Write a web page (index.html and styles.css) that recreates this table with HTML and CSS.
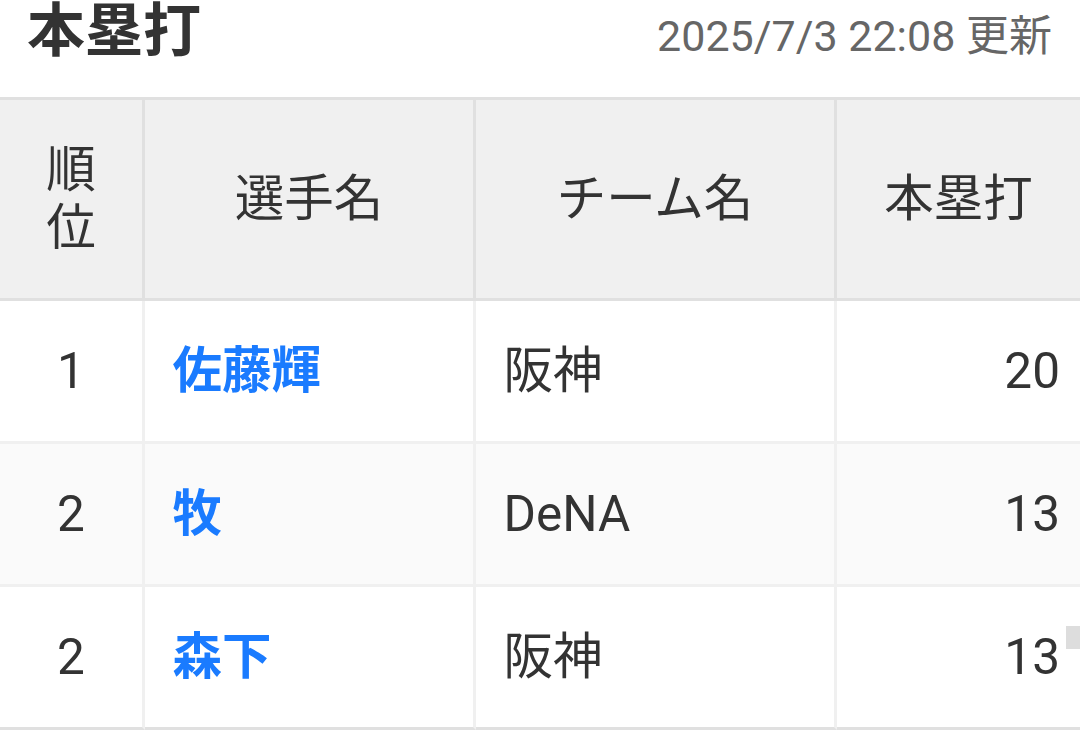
FILE: index.html
```html
<!DOCTYPE html>
<html lang="ja">
<head>
<meta charset="utf-8">
<title>本塁打</title>
<link rel="stylesheet" href="styles.css">
</head>
<body>
<div class="page">
  <div class="head">
    <h1 class="title">本塁打</h1>
    <span class="updated">2025/7/3 22:08 更新</span>
  </div>
  <table class="rank">
    <colgroup>
      <col class="c-rank">
      <col class="c-name">
      <col class="c-team">
      <col class="c-hr">
    </colgroup>
    <thead>
      <tr>
        <th>順位</th>
        <th>選手名</th>
        <th>チーム名</th>
        <th class="last">本塁打</th>
      </tr>
    </thead>
    <tbody>
      <tr>
        <td class="num-c">1</td>
        <td><a class="player" href="#">佐藤輝</a></td>
        <td>阪神</td>
        <td class="num-r last">20</td>
      </tr>
      <tr class="alt">
        <td class="num-c">2</td>
        <td><a class="player" href="#">牧</a></td>
        <td>DeNA</td>
        <td class="num-r last">13</td>
      </tr>
      <tr>
        <td class="num-c">2</td>
        <td><a class="player" href="#">森下</a></td>
        <td>阪神</td>
        <td class="num-r last">13</td>
      </tr>
    </tbody>
  </table>
  <div class="scroll-thumb"></div>
</div>
</body>
</html>
```

FILE: styles.css
```css
html, body {
  margin: 0;
  padding: 0;
  background: #ffffff;
  overflow: hidden;
}

body {
  font-family: "Roboto", "Noto Sans CJK JP", sans-serif;
  color: #333333;
}

.page {
  position: relative;
  width: 1080px;
  height: 752px;
  overflow: hidden;
}

.head {
  display: flex;
  justify-content: space-between;
  align-items: baseline;
  padding: 2px 28px 0 27px;
  height: 95px;
}

.title {
  margin: 0;
  font-size: 58px;
  font-weight: 700;
  line-height: 1;
  color: #333333;
}

.updated {
  font-size: 43px;
  line-height: 1;
  color: #666666;
}

.rank {
  width: 1080px;
  table-layout: fixed;
  border-collapse: separate;
  border-spacing: 0;
  border-top: 3px solid #e0e0e0;
  font-size: 49.5px;
  line-height: 58px;
}

.c-rank { width: 145px; }
.c-name { width: 331px; }
.c-team { width: 361px; }
.c-hr { width: 243px; }

.rank th {
  background: #f0f0f0;
  font-weight: 400;
  text-align: center;
  vertical-align: middle;
  padding: 41px 27.5px;
  border-right: 3px solid #e0e0e0;
  border-bottom: 3px solid #e0e0e0;
  color: #333333;
}

.rank td {
  padding: 41px 27.5px;
  border-right: 3px solid #f0f0f0;
  border-bottom: 3px solid #f0f0f0;
  vertical-align: middle;
  white-space: nowrap;
}

.rank tbody tr:last-child td {
  border-bottom-color: #e0e0e0;
}

.rank .last {
  border-right: none;
}

.rank td.num-r {
  text-align: right;
  padding-right: 20px;
}

.rank td.num-c {
  text-align: center;
}

.alt td {
  background: #fafafa;
}

.player {
  color: #1a7bff;
  font-weight: 700;
  text-decoration: none;
}

.scroll-thumb {
  position: absolute;
  right: 0;
  top: 626px;
  width: 14px;
  height: 23px;
  background: #dddddd;
}
```
